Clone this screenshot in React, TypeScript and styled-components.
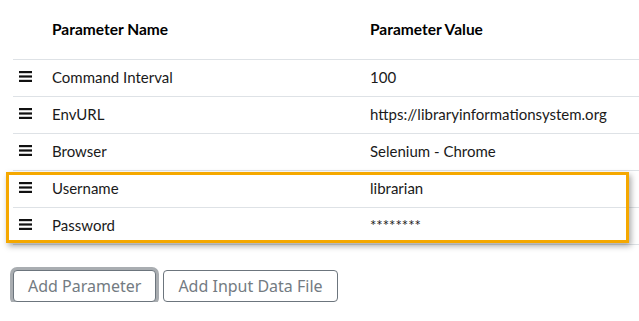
import React from "react";
import styled, { createGlobalStyle } from "styled-components";

const Global = createGlobalStyle`
  html, body { margin: 0; padding: 0; background: #ffffff; }
  body { font-family: "Lato", "Open Sans", sans-serif; color: #212529; }
  * { box-sizing: border-box; }
`;

const Page = styled.div`
  padding: 0 0 0 13px;
  width: 639px;
`;

const Row = styled.div<{ $header?: boolean }>`
  display: grid;
  grid-template-columns: 39px 318px 1fr;
  align-items: center;
  height: ${(p) => (p.$header ? "60px" : "37px")};
  padding-bottom: ${(p) => (p.$header ? "1px" : "3px")};
  border-bottom: 1px solid #dee2e6;
  font-size: ${(p) => (p.$header ? "15.5px" : "15px")};
  font-weight: ${(p) => (p.$header ? 700 : 400)};
  color: ${(p) => (p.$header ? "#000" : "#1a1a1a")};
`;

const Cell = styled.div`
  white-space: nowrap;
`;

const Handle = styled.div`
  display: flex;
  align-items: center;
  padding-left: 6px;
`;

const Group = styled.div`
  position: relative;
`;

const Highlight = styled.div`
  position: absolute;
  left: -7px;
  right: 10px;
  top: 1px;
  bottom: 2px;
  border: 3px solid #f5a800;
  box-shadow: 2px 3px 6px rgba(0, 0, 0, 0.35);
  pointer-events: none;
`;

const Actions = styled.div`
  display: flex;
  gap: 7px;
  padding: 25px 0 0 0;
`;

const Button = styled.button<{ $focused?: boolean }>`
  font-family: "Noto Sans", "Open Sans", sans-serif;
  font-size: 16px;
  color: #737b82;
  background: #fff;
  border: 1px solid #6c757d;
  border-radius: 4px;
  height: 32px;
  padding: 0 14px;
  box-shadow: ${(p) => (p.$focused ? "0 0 0 3px #a9adb1" : "none")};
`;

const BarsIcon = () => (
  <svg width="13" height="11" viewBox="0 0 13 11">
    <rect x="0" y="0" width="13" height="2.2" fill="#111" />
    <rect x="0" y="4.4" width="13" height="2.2" fill="#111" />
    <rect x="0" y="8.8" width="13" height="2.2" fill="#111" />
  </svg>
);

type Param = { name: string; value: string };

const top: Param[] = [
  { name: "Command Interval", value: "100" },
  { name: "EnvURL", value: "https://libraryinformationsystem.org" },
  { name: "Browser", value: "Selenium - Chrome" },
];
const highlighted: Param[] = [
  { name: "Username", value: "librarian" },
  { name: "Password", value: "********" },
];

const ParamRow = ({ p }: { p: Param }) => (
  <Row>
    <Handle>
      <BarsIcon />
    </Handle>
    <Cell>{p.name}</Cell>
    <Cell>{p.value}</Cell>
  </Row>
);

export default function App() {
  return (
    <>
      <Global />
      <Page>
        <Row $header>
          <Cell />
          <Cell>Parameter Name</Cell>
          <Cell>Parameter Value</Cell>
        </Row>
        {top.map((p) => (
          <ParamRow key={p.name} p={p} />
        ))}
        <Group>
          {highlighted.map((p) => (
            <ParamRow key={p.name} p={p} />
          ))}
          <Highlight />
        </Group>
        <Actions>
          <Button $focused>Add Parameter</Button>
          <Button>Add Input Data File</Button>
        </Actions>
      </Page>
    </>
  );
}
